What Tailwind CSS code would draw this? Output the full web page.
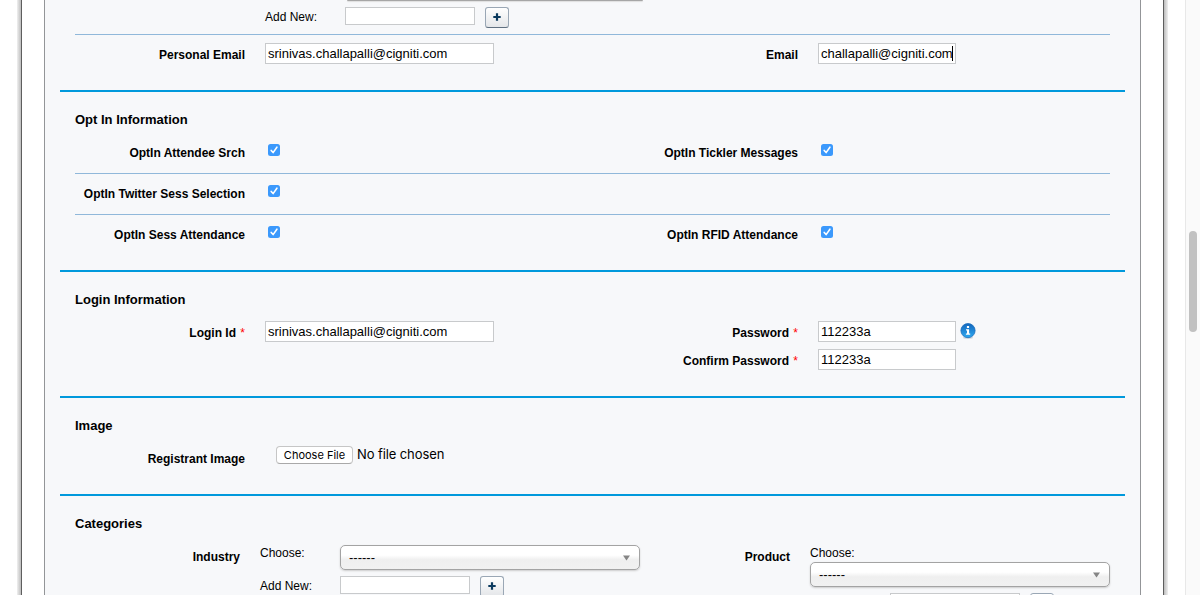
<!DOCTYPE html>
<html lang="en">
<head>
<meta charset="utf-8">
<title>Registrant</title>
<script src="https://cdn.jsdelivr.net/npm/@tailwindcss/browser@4"></script>
</head>
<body class="h-[595px] overflow-hidden bg-white text-black text-[12px] leading-4 font-['Liberation_Sans',Arial,sans-serif]">
<svg class="hidden">
  <symbol id="check" viewBox="0 0 12 12"><rect width="12" height="12" rx="2.5" fill="#3b99fc"/><path d="M3.2 6.4 5.1 8.6 8.9 3.2" fill="none" stroke="#fff" stroke-width="1.6" stroke-linecap="round" stroke-linejoin="round"/></symbol>
  <symbol id="plus" viewBox="0 0 8 8"><path d="M4 .3V7.7M.3 4H7.7" stroke="#0b3a5e" stroke-width="2.2"/></symbol>
  <symbol id="arrow" viewBox="0 0 7 6"><path d="M0 .5H7L3.5 5.5Z" fill="#858585"/></symbol>
</svg>
<div class="flex h-full">
  <div class="w-[17px]"></div>
  <div class="w-1 bg-linear-to-r from-[#f0f0f0] to-[#bdbdbd]"></div>
  <div class="w-px bg-[#5e5e5e]"></div>
  <div class="w-[22px]"></div>
  <main class="flex h-full w-[1097px] flex-col border-x border-[#939598] bg-[#f7f8fa] px-[15px]">

    <section class="h-[92px] shrink-0 border-b-2 border-[#0099dc] px-[15px]">
      <div class="h-[35px] border-b border-[#90b8da] pl-[190px]">
        <div class="ml-[82px] h-px w-[296px] rounded-b bg-[#a6a6a6] shadow-[0_1px_1px_#ddd]"></div>
        <div class="flex pt-[6px]">
          <span class="w-20 pt-[2px]">Add New:</span>
          <span class="h-[18px] w-[130px] border border-[#c8cacc] bg-white"></span>
          <button class="ml-[10px] flex h-[21px] w-6 items-center justify-center rounded-[3px] border border-[#9aa7b5] border-b-[#5f6f80] bg-linear-to-b from-white to-[#e4e6e9] pb-px"><svg class="h-2 w-2"><use href="#plus"/></svg></button>
        </div>
      </div>
      <div class="grid grid-cols-[170px_383px_170px_1fr] pt-2">
        <b class="pt-1 text-right">Personal Email</b>
        <div class="pl-5"><div class="h-[21px] w-[229px] border border-[#c8cacc] bg-white pl-[2px] pt-[2px] text-[13px] whitespace-nowrap">srinivas.challapalli@cigniti.com</div></div>
        <b class="pt-1 text-right">Email</b>
        <div class="pl-5"><div class="flex h-[21px] w-[138px] border border-[#c8cacc] bg-white pl-[2px] pt-[2px] text-[13px] whitespace-nowrap"><span class="w-[131px]">challapalli@cigniti.com</span><i class="h-[15px] w-px bg-black"></i></div></div>
      </div>
    </section>

    <section class="h-[180px] shrink-0 border-b-2 border-[#0099dc] px-[15px]">
      <h2 class="h-[41px] pt-[20px] text-[13px] font-bold">Opt In Information</h2>
      <div class="grid h-[41px] grid-cols-[170px_383px_170px_1fr] border-b border-[#90b8da]">
        <b class="pt-3 text-right">OptIn Attendee Srch</b>
        <div class="pl-[23px] pt-[11px]"><svg class="h-3 w-3"><use href="#check"/></svg></div>
        <b class="pt-3 text-right">OptIn Tickler Messages</b>
        <div class="pl-[23px] pt-[11px]"><svg class="h-3 w-3"><use href="#check"/></svg></div>
      </div>
      <div class="grid h-[41px] grid-cols-[170px_383px_170px_1fr] border-b border-[#90b8da]">
        <b class="pt-3 text-right whitespace-nowrap">OptIn Twitter Sess Selection</b>
        <div class="pl-[23px] pt-[11px]"><svg class="h-3 w-3"><use href="#check"/></svg></div>
      </div>
      <div class="grid h-[41px] grid-cols-[170px_383px_170px_1fr]">
        <b class="pt-3 text-right">OptIn Sess Attendance</b>
        <div class="pl-[23px] pt-[11px]"><svg class="h-3 w-3"><use href="#check"/></svg></div>
        <b class="pt-3 text-right">OptIn RFID Attendance</b>
        <div class="pl-[23px] pt-[11px]"><svg class="h-3 w-3"><use href="#check"/></svg></div>
      </div>
    </section>

    <section class="h-[126px] shrink-0 border-b-2 border-[#0099dc] px-[15px]">
      <h2 class="h-[41px] pt-[20px] text-[13px] font-bold">Login Information</h2>
      <div class="grid grid-cols-[170px_383px_170px_1fr] gap-y-[7px] pt-2">
        <b class="pt-1 text-right">Login Id <span class="ml-px font-normal text-[#f00]">*</span></b>
        <div class="pl-5"><div class="h-[21px] w-[229px] border border-[#c8cacc] bg-white pl-[2px] pt-[2px] text-[13px] whitespace-nowrap">srinivas.challapalli@cigniti.com</div></div>
        <b class="pt-1 text-right">Password <span class="ml-px font-normal text-[#f00]">*</span></b>
        <div class="flex pl-5">
          <div class="h-[21px] w-[138px] border border-[#c8cacc] bg-white pl-[2px] pt-[2px] text-[13px]">112233a</div>
          <svg class="ml-1 mt-[1.5px] h-4 w-4" viewBox="0 0 16 16"><defs><linearGradient id="info" x2="0" y2="1"><stop stop-color="#1266bd"/><stop offset="1" stop-color="#2ea9f0"/></linearGradient></defs><ellipse cx="8" cy="14.8" rx="5" ry="1" fill="#c9d3dc"/><circle cx="8" cy="7.6" r="7.1" fill="url(#info)" stroke="#1c6fbd" stroke-width=".8"/><path d="M6.9 3H9.1V5H6.9ZM6 6.2H9.1V10.6H10.2V11.8H5.9V10.6H7V7.4H6Z" fill="#fff"/></svg>
        </div>
        <b class="col-start-3 pt-1 text-right">Confirm Password <span class="ml-px font-normal text-[#f00]">*</span></b>
        <div class="pl-5"><div class="h-[21px] w-[138px] border border-[#c8cacc] bg-white pl-[2px] pt-[2px] text-[13px]">112233a</div></div>
      </div>
    </section>

    <section class="h-[98px] shrink-0 border-b-2 border-[#0099dc] px-[15px]">
      <h2 class="h-[41px] pt-[20px] text-[13px] font-bold">Image</h2>
      <div class="flex">
        <b class="w-[170px] pt-3 text-right">Registrant Image</b>
        <button class="ml-[31px] mt-[7px] h-[18px] w-[77px] rounded-[4px] border border-[#c6c6c6] border-b-[#a9a9a9] bg-white font-['Inter',sans-serif] text-[11px] leading-4 whitespace-nowrap">Choose File</button>
        <span class="ml-1 mt-[7px] font-['Inter',sans-serif] text-[13px] tracking-[-0.1px] whitespace-nowrap">No file chosen</span>
      </div>
    </section>

    <section class="min-h-0 flex-1 overflow-hidden px-[15px]">
      <h2 class="h-[41px] pt-[20px] text-[13px] font-bold">Categories</h2>
      <div class="grid grid-cols-[165px_385px_165px_1fr]">
        <b class="pt-3 text-right">Industry</b>
        <div class="-mr-4 pl-5">
          <div class="flex pt-2">
            <span class="w-20 shrink-0">Choose:</span>
            <div class="flex h-[25px] w-[300px] shrink-0 items-center justify-between rounded-[5px] border border-[#a3a3a3] bg-linear-to-b from-white from-40% via-[#efefef] via-60% to-[#f1f1f1] pr-[9px] pl-2 shadow-[0_1px_2px_#ccc]"><span class="text-[13px]">------</span><svg class="h-[6px] w-[7px]"><use href="#arrow"/></svg></div>
          </div>
          <div class="flex pt-[6px]">
            <span class="w-20 pt-[2px]">Add New:</span>
            <span class="h-[18px] w-[130px] border border-[#c8cacc] bg-white"></span>
            <button class="ml-[10px] flex h-[21px] w-6 items-center justify-center rounded-[3px] border border-[#9aa7b5] border-b-[#5f6f80] bg-linear-to-b from-white to-[#e4e6e9] pb-px"><svg class="h-2 w-2"><use href="#plus"/></svg></button>
          </div>
        </div>
        <b class="pt-3 text-right">Product</b>
        <div class="pt-2 pl-5">
          <div class="h-[17px]">Choose:</div>
          <div class="flex h-[25px] w-[300px] items-center justify-between rounded-[5px] border border-[#a3a3a3] bg-linear-to-b from-white from-40% via-[#efefef] via-60% to-[#f1f1f1] pr-[9px] pl-2 shadow-[0_1px_2px_#ccc]"><span class="text-[13px]">------</span><svg class="h-[6px] w-[7px]"><use href="#arrow"/></svg></div>
          <div class="flex pt-[6px] pl-20">
            <span class="h-[18px] w-[130px] border border-[#c8cacc] bg-white"></span>
            <span class="ml-[10px] h-[21px] w-6 rounded-[3px] border border-[#9aa7b5] bg-white"></span>
          </div>
        </div>
      </div>
    </section>
  </main>
  <div class="w-[22px]"></div>
  <div class="w-px bg-[#5e5e5e]"></div>
  <div class="w-1 bg-linear-to-r from-[#bdbdbd] to-[#f0f0f0]"></div>
  <div class="w-[17px]"></div>
  <div class="w-[15px] border-l border-[#e8e8e8] bg-[#fafafa] pt-[231px] pl-[3px]"><div class="h-[101px] w-2 rounded-full bg-[#c1c1c1]"></div></div>
</div>
</body>
</html>
